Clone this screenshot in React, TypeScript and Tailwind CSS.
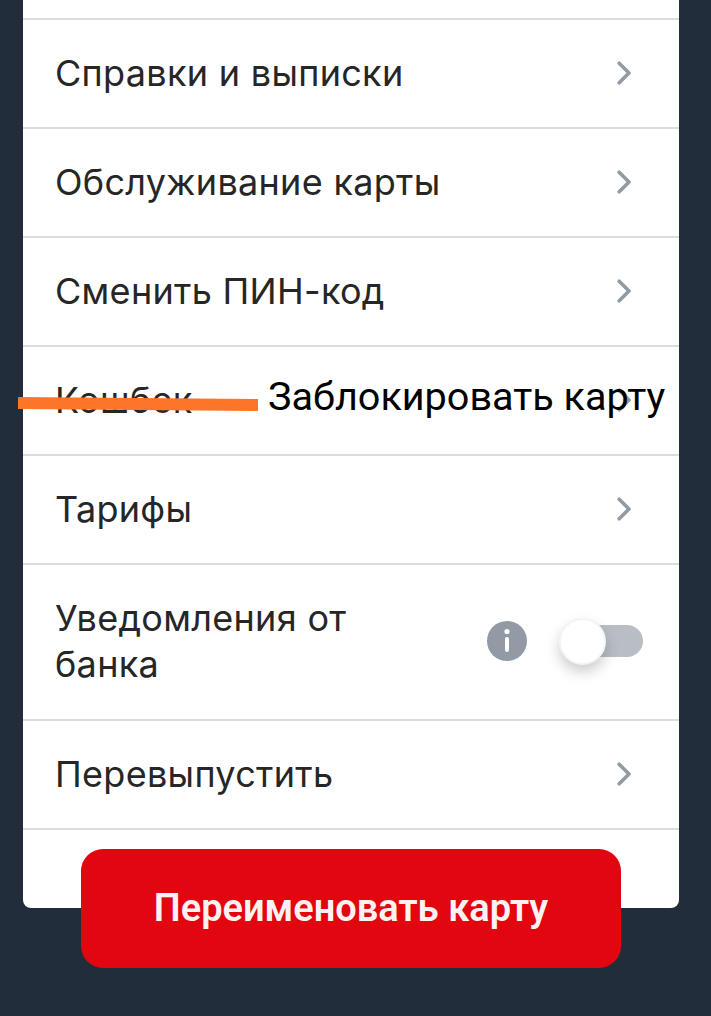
const Chevron = () => (
  <svg width="15" height="24" viewBox="0 0 15 24" fill="none" className="shrink-0">
    <path d="M2.2 2.2L12 12L2.2 21.8" stroke="#929ba3" strokeWidth="3.6" strokeLinecap="round" strokeLinejoin="round" />
  </svg>
);

const Row = ({ label }: { label: string }) => (
  <div className="flex h-[109px] items-center justify-between border-b-2 border-[#dcdcdc] pb-[2px] pl-[32px] pr-[47px]">
    <span className="text-[36px] leading-[46px] tracking-[0.3px] text-[#262626]" style={{ fontFamily: "Inter, sans-serif" }}>
      {label}
    </span>
    <Chevron />
  </div>
);

export default function App() {
  return (
    <div className="relative h-[1016px] w-[711px] overflow-hidden bg-[#212d3b] pl-[23px] pr-[32px]">
      <div className="h-[908px] rounded-b-[8px] bg-white">
        <div className="h-[20px] border-b-2 border-[#dcdcdc]" />
        <Row label="Справки и выписки" />
        <Row label="Обслуживание карты" />
        <Row label="Сменить ПИН-код" />
        <Row label="Кошбек" />
        <Row label="Тарифы" />
        <div className="flex h-[156px] items-center justify-between border-b-2 border-[#dcdcdc] pb-[2px] pl-[32px] pr-[36px]">
          <span className="text-[36px] leading-[46px] tracking-[0.3px] text-[#262626]" style={{ fontFamily: "Inter, sans-serif" }}>
            Уведомления от
            <br />
            банка
          </span>
          <div className="flex items-center gap-[33px]">
            <svg width="40" height="40" viewBox="0 0 40 40" className="shrink-0">
              <circle cx="20" cy="20" r="20" fill="#929ba5" />
              <circle cx="20" cy="10.5" r="2.6" fill="#fff" />
              <rect x="18" y="16" width="4" height="15" rx="2" fill="#fff" />
            </svg>
            <div className="relative h-[32px] w-[83px] rounded-full bg-[#b9bec5]">
              <div className="absolute left-[-1px] top-[-7px] h-[47px] w-[47px] rounded-full border-2 border-[#f3f4f6] bg-white shadow-[0_7px_14px_rgba(0,0,0,0.2)]" />
            </div>
          </div>
        </div>
        <Row label="Перевыпустить" />
      </div>

      <button
        className="absolute left-[81px] top-[849px] flex h-[119px] w-[540px] items-center justify-center rounded-[22px] bg-[#e1060f] text-[38px] font-semibold text-[#fdf1f3]"
        style={{ fontFamily: "Roboto, sans-serif" }}
      >
        Переименовать карту
      </button>

      <div className="absolute left-[18px] top-[398px] h-[12px] w-[240px] rotate-[0.5deg] bg-[#fd7528]" />
      <span
        className="absolute left-[268px] top-[374px] text-[39.6px] leading-[46px] text-black"
        style={{ fontFamily: "Roboto, sans-serif" }}
      >
        Заблокировать карту
      </span>
    </div>
  );
}
